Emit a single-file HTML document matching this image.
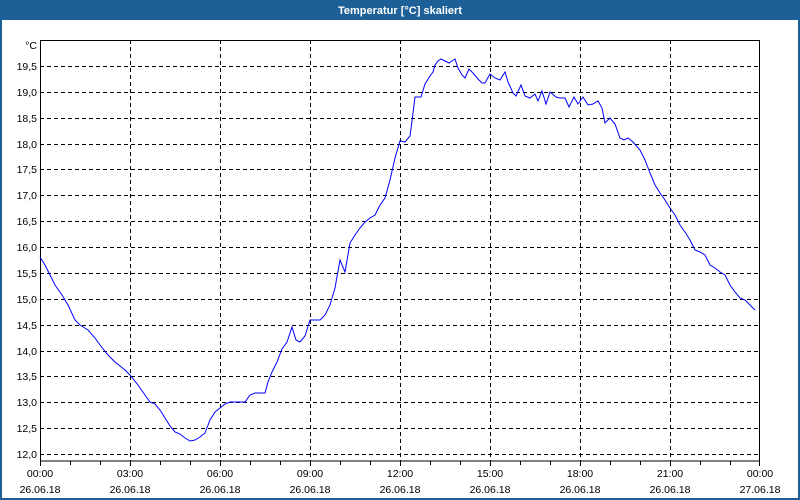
<!DOCTYPE html>
<html><head><meta charset="utf-8"><style>
html,body{margin:0;padding:0;width:800px;height:500px;overflow:hidden;background:#fff;}
</style></head><body>
<svg width="800" height="500" xmlns="http://www.w3.org/2000/svg" font-family="'Liberation Sans', sans-serif" font-size="10.5">
<rect x="0" y="0" width="800" height="500" fill="#1d5f97"/>
<rect x="2" y="20" width="796" height="478" fill="#fff"/>
<text x="400" y="14" fill="#fff" font-weight="bold" text-anchor="middle" font-size="11">Temperatur [°C] skaliert</text>
<g stroke="#000" stroke-dasharray="4,3" stroke-width="1">
<line x1="40" x2="760" y1="66.5" y2="66.5"/><line x1="40" x2="760" y1="92.5" y2="92.5"/>
<line x1="40" x2="760" y1="118.5" y2="118.5"/><line x1="40" x2="760" y1="144.5" y2="144.5"/>
<line x1="40" x2="760" y1="169.5" y2="169.5"/><line x1="40" x2="760" y1="195.5" y2="195.5"/>
<line x1="40" x2="760" y1="221.5" y2="221.5"/><line x1="40" x2="760" y1="247.5" y2="247.5"/>
<line x1="40" x2="760" y1="273.5" y2="273.5"/><line x1="40" x2="760" y1="299.5" y2="299.5"/>
<line x1="40" x2="760" y1="325.5" y2="325.5"/><line x1="40" x2="760" y1="351.5" y2="351.5"/>
<line x1="40" x2="760" y1="376.5" y2="376.5"/><line x1="40" x2="760" y1="402.5" y2="402.5"/>
<line x1="40" x2="760" y1="428.5" y2="428.5"/><line x1="40" x2="760" y1="454.5" y2="454.5"/>
<line x1="130.5" x2="130.5" y1="40" y2="461"/><line x1="220.5" x2="220.5" y1="40" y2="461"/>
<line x1="310.5" x2="310.5" y1="40" y2="461"/><line x1="400.5" x2="400.5" y1="40" y2="461"/>
<line x1="490.5" x2="490.5" y1="40" y2="461"/><line x1="580.5" x2="580.5" y1="40" y2="461"/>
<line x1="670.5" x2="670.5" y1="40" y2="461"/>
</g>
<rect x="40.5" y="40.5" width="719" height="420.5" fill="none" stroke="#000"/>
<g stroke="#000">
<line x1="40.5" x2="40.5" y1="461" y2="466"/><line x1="70.5" x2="70.5" y1="461" y2="465"/><line x1="100.5" x2="100.5" y1="461" y2="465"/>
<line x1="130.5" x2="130.5" y1="461" y2="466"/><line x1="160.5" x2="160.5" y1="461" y2="465"/><line x1="190.5" x2="190.5" y1="461" y2="465"/>
<line x1="220.5" x2="220.5" y1="461" y2="466"/><line x1="250.5" x2="250.5" y1="461" y2="465"/><line x1="280.5" x2="280.5" y1="461" y2="465"/>
<line x1="310.5" x2="310.5" y1="461" y2="466"/><line x1="340.5" x2="340.5" y1="461" y2="465"/><line x1="370.5" x2="370.5" y1="461" y2="465"/>
<line x1="400.5" x2="400.5" y1="461" y2="466"/><line x1="430.5" x2="430.5" y1="461" y2="465"/><line x1="460.5" x2="460.5" y1="461" y2="465"/>
<line x1="490.5" x2="490.5" y1="461" y2="466"/><line x1="520.5" x2="520.5" y1="461" y2="465"/><line x1="550.5" x2="550.5" y1="461" y2="465"/>
<line x1="580.5" x2="580.5" y1="461" y2="466"/><line x1="610.5" x2="610.5" y1="461" y2="465"/><line x1="640.5" x2="640.5" y1="461" y2="465"/>
<line x1="670.5" x2="670.5" y1="461" y2="466"/><line x1="700.5" x2="700.5" y1="461" y2="465"/><line x1="730.5" x2="730.5" y1="461" y2="465"/>
<line x1="759.5" x2="759.5" y1="461" y2="466"/>
</g>
<g fill="#000" text-anchor="end">
<text x="37" y="49">°C</text>
<text x="37" y="70">19,5</text><text x="37" y="96">19,0</text><text x="37" y="122">18,5</text><text x="37" y="148">18,0</text>
<text x="37" y="173">17,5</text><text x="37" y="199">17,0</text><text x="37" y="225">16,5</text><text x="37" y="251">16,0</text>
<text x="37" y="277">15,5</text><text x="37" y="303">15,0</text><text x="37" y="329">14,5</text><text x="37" y="355">14,0</text>
<text x="37" y="380">13,5</text><text x="37" y="406">13,0</text><text x="37" y="432">12,5</text><text x="37" y="458">12,0</text>
</g>
<g fill="#000" text-anchor="middle">
<text x="40" y="477">00:00</text><text x="40" y="493">26.06.18</text>
<text x="130" y="477">03:00</text><text x="130" y="493">26.06.18</text>
<text x="220" y="477">06:00</text><text x="220" y="493">26.06.18</text>
<text x="310" y="477">09:00</text><text x="310" y="493">26.06.18</text>
<text x="400" y="477">12:00</text><text x="400" y="493">26.06.18</text>
<text x="490" y="477">15:00</text><text x="490" y="493">26.06.18</text>
<text x="580" y="477">18:00</text><text x="580" y="493">26.06.18</text>
<text x="670" y="477">21:00</text><text x="670" y="493">26.06.18</text>
<text x="760" y="477">00:00</text><text x="760" y="493">27.06.18</text>
</g>
<polyline fill="none" stroke="#0000ff" stroke-width="1" points="40,257 45,265 50,275 55,285 62,295 68,305 75,320 80,325 88,330 95,338 100,345 108,355 115,362 125,370 130,375 138,385 145,395 150,402 155,404 160,410 165,418 170,426 175,432 180,434 185,438 190,441 195,440 200,437 205,433 210,420 215,412 220,408 225,404 230,402 240,402 245,402 250,395 255,393 260,393 265,393 268,382 272,372 277,362 282,349 287,342 292,327 296,340 300,342 305,336 310,320 315,320 320,320 325,315 330,305 335,288 340,260 345,272 350,243 355,235 360,228 365,222 370,218 375,215 380,205 385,198 390,180 395,158 400,141 405,142 410,136 412,121 415,97 421,97 425,84 430,76 433,72 435,65 438,61 441,59 445,61 449,63 452,61 455,59 458,68 462,75 465,78 469,69 473,73 478,79 482,83 485,83 490,74 495,78 500,80 505,72 508,82 513,93 516,96 521,85 525,96 530,98 535,94 538,101 542,91 546,104 550,92 556,97 560,98 565,98 569,107 574,97 578,104 583,97 588,105 593,104 598,101 602,108 605,123 610,118 615,124 620,138 624,140 628,138 633,142 640,150 645,160 650,173 655,185 660,193 665,200 670,208 675,215 680,225 685,232 690,240 695,250 700,252 705,255 710,265 715,268 720,272 725,275 730,285 735,292 740,298 745,300 750,305 755,310"/>
</svg>
</body></html>
